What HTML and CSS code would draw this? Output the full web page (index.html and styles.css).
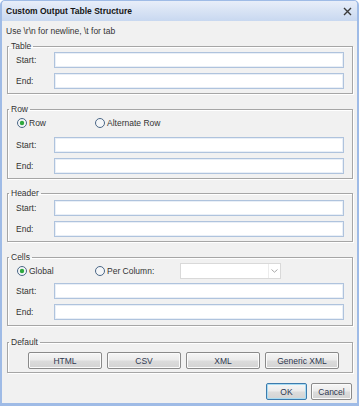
FILE: index.html
```html
<!DOCTYPE html>
<html lang="en">
	<head>
		<meta charset="UTF-8">
		<meta name="viewport" content="width=device-width, initial-scale=1">
		<title>Custom Output Table Structure</title>
		<link rel="stylesheet" href="styles.css">
	</head>
	<body>
		<div class="window">
			<div class="titlebar">
				<span class="title">Custom Output Table Structure</span>
				<svg class="close" width="9" height="9" viewBox="0 0 9 9">
					<path d="M1 1 L8 8 M8 1 L1 8" stroke="#3a3a3a" stroke-width="1.4" fill="none"/>
				</svg>
			</div>

			<p class="hint">Use \r\n for newline, \t for tab</p>

			<fieldset class="group group-table">
				<legend>Table</legend>
				<div class="field"><label>Start:</label><input type="text"></div>
				<div class="field"><label>End:</label><input type="text"></div>
			</fieldset>

			<fieldset class="group group-row">
				<legend>Row</legend>
				<div class="choices">
					<span class="choice">
						<svg class="radio" width="10" height="10" viewBox="0 0 10 10">
							<circle cx="5" cy="5" r="4.5" fill="#f4f6f8" stroke="#4a6686"/>
							<circle cx="5" cy="5" r="2.2" fill="#2fa83f"/>
						</svg>
						Row
					</span>
					<span class="choice">
						<svg class="radio" width="10" height="10" viewBox="0 0 10 10">
							<circle cx="5" cy="5" r="4.5" fill="#f4f6f8" stroke="#4a6686"/>
						</svg>
						Alternate Row
					</span>
				</div>
				<div class="field"><label>Start:</label><input type="text"></div>
				<div class="field"><label>End:</label><input type="text"></div>
			</fieldset>

			<fieldset class="group group-header">
				<legend>Header</legend>
				<div class="field"><label>Start:</label><input type="text"></div>
				<div class="field"><label>End:</label><input type="text"></div>
			</fieldset>

			<fieldset class="group group-cells">
				<legend>Cells</legend>
				<div class="choices">
					<span class="choice">
						<svg class="radio" width="10" height="10" viewBox="0 0 10 10">
							<circle cx="5" cy="5" r="4.5" fill="#f4f6f8" stroke="#4a6686"/>
							<circle cx="5" cy="5" r="2.2" fill="#2fa83f"/>
						</svg>
						Global
					</span>
					<span class="choice choice-wide">
						<svg class="radio" width="10" height="10" viewBox="0 0 10 10">
							<circle cx="5" cy="5" r="4.5" fill="#f4f6f8" stroke="#4a6686"/>
						</svg>
						Per Column:
					</span>
					<div class="combo">
						<span class="combo-text"></span>
						<span class="combo-button">
							<svg width="7" height="4" viewBox="0 0 7 4">
								<path d="M0.5 0.5 L3.5 3.2 L6.5 0.5" stroke="#a8a8a8" fill="none"/>
							</svg>
						</span>
					</div>
				</div>
				<div class="field"><label>Start:</label><input type="text"></div>
				<div class="field"><label>End:</label><input type="text"></div>
			</fieldset>

			<fieldset class="group group-default">
				<legend>Default</legend>
				<div class="presets">
					<button class="btn preset">HTML</button>
					<button class="btn preset">CSV</button>
					<button class="btn preset">XML</button>
					<button class="btn preset">Generic XML</button>
				</div>
			</fieldset>

			<div class="actions">
				<button class="btn action btn-default">OK</button>
				<button class="btn action">Cancel</button>
			</div>
		</div>
	</body>
</html>
```

FILE: styles.css
```css
*{
	box-sizing: border-box;
}
body{
	margin: 0;
	font-family: "Liberation Sans", Arial, sans-serif;
	font-size: 8.5px;
	color: #333;
	background: #fff;
}
.window{
	width: 359px;
	height: 406px;
	display: flex;
	flex-direction: column;
	background: #f1f1f1;
	border: solid #9fbbe6;
	border-width: 1px 2px 3px 2px;
	border-radius: 5px 5px 0 0;
	overflow: hidden;
}
.titlebar{
	height: 20px;
	flex: none;
	display: flex;
	align-items: center;
	justify-content: space-between;
	padding: 0 5px 0 4px;
	background: linear-gradient(#e8eef9, #c8d8f0);
}
.title{
	font-weight: bold;
	color: #151515;
}
.hint{
	margin: 4px 0 0 4px;
	line-height: 12px;
}
.group{
	margin: 3px 4px 0 5px;
	padding: 0 0 4px 0;
	min-width: 0;
	border: 1px solid #a6a6a6;
	box-shadow: inset 1px 1px 0 #fff, 1px 1px 0 #fff;
}
.group legend{
	margin-left: 1px;
	padding: 0 2px;
	line-height: 12px;
}
.group-row, .group-cells{
	margin-top: 9px;
}
.group-header{
	margin-top: 8px;
	padding-top: 1px;
}
.group-cells{
	padding-bottom: 5px;
}
.group-default{
	margin-top: 10px;
	padding-bottom: 3px;
}
.field{
	display: flex;
	align-items: center;
	height: 16px;
	padding-left: 8px;
}
.field + .field{
	margin-top: 5px;
}
.field label{
	width: 38px;
}
.field input{
	width: 290px;
	height: 16px;
	margin: 0;
	padding: 0 2px;
	background: #fff;
	border: 1px solid #afc3dd;
	box-shadow: inset 0 0 0 1px #e9eff7;
	font: inherit;
}
.choices{
	display: flex;
	align-items: center;
	height: 16px;
	padding-left: 9px;
	margin-bottom: 6px;
}
.group-cells .choices{
	margin-bottom: 4px;
}
.choice{
	display: flex;
	align-items: center;
	gap: 2px;
	width: 78px;
}
.choice-wide{
	width: 85px;
}
.radio{
	flex: none;
}
.combo{
	display: flex;
	width: 101px;
	height: 16px;
	background: #fff;
	border: 1px solid #d9d9d9;
}
.combo-text{
	flex: 1;
}
.combo-button{
	width: 12px;
	display: flex;
	align-items: center;
	justify-content: center;
	border-left: 1px solid #ececec;
}
.btn{
	margin: 0;
	padding: 0;
	height: 17px;
	font: inherit;
	color: #2f3850;
	background: linear-gradient(#f6f6f6 0%, #ebebeb 48%, #dcdcdc 52%, #d3d3d3 100%);
	border: 1px solid #8a8a8a;
	border-radius: 2px;
	box-shadow: inset 0 0 0 1px #fbfbfb;
}
.presets{
	display: flex;
	gap: 5px;
	padding: 4px 0 0 20px;
}
.preset{
	width: 74px;
}
.actions{
	display: flex;
	justify-content: flex-end;
	gap: 4px;
	margin: 10px 5px 0 0;
}
.action{
	width: 41px;
}
.btn-default{
	border-color: #3d7bad;
	box-shadow: inset 0 0 0 1px #a9dcf3;
}
```
